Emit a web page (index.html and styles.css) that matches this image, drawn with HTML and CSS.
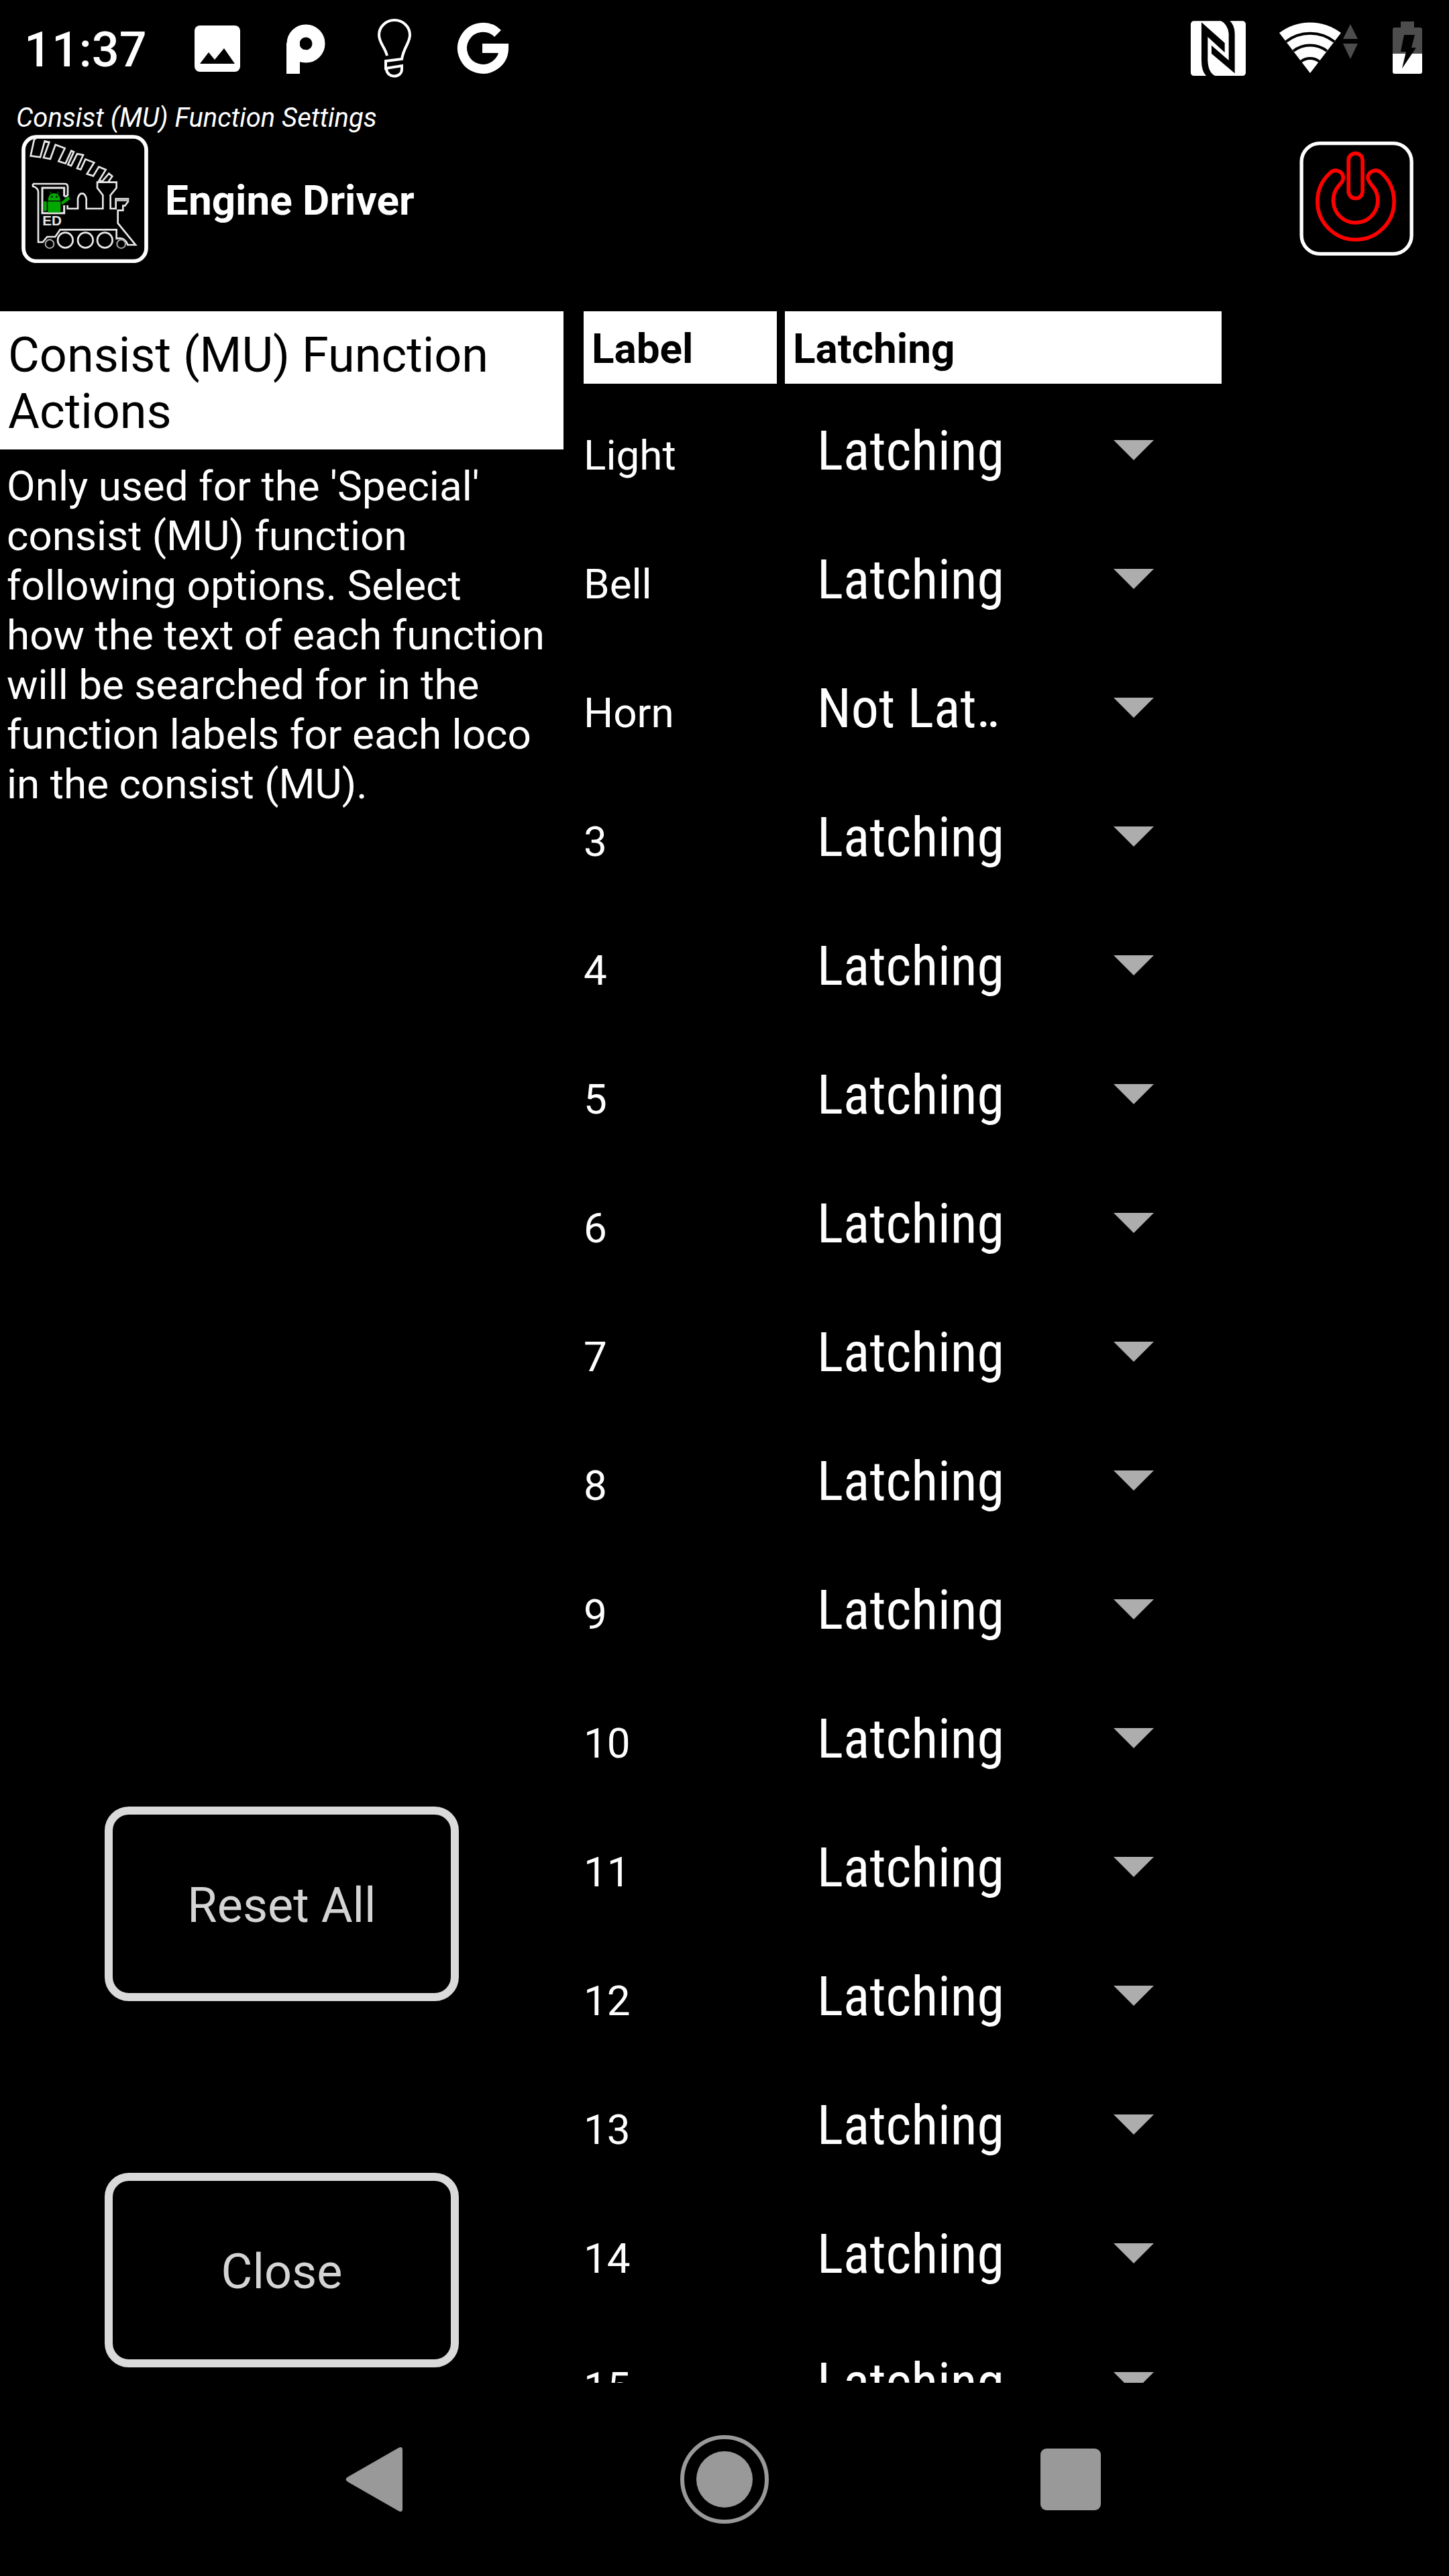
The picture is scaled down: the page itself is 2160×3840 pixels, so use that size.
FILE: index.html
```html
<!DOCTYPE html>
<html lang="en">
<head>
<meta charset="utf-8">
<title>Engine Driver</title>
<meta name="viewport" content="width=device-width, initial-scale=1">
<link rel="stylesheet" href="styles.css">
</head>
<body>
<div class="status-bar">
  <time class="clock">11:37</time>
  <div class="status-icons">
    <svg class="status-icon" viewBox="274 22 100 100" aria-hidden="true"><rect x="290" y="38" width="68" height="69" rx="8" fill="#fff"/><path d="M298 95 L311 78 L320 89 L334 72 L350 95Z"/></svg>
    <svg class="status-icon" viewBox="406 22 100 100" aria-hidden="true"><circle cx="456" cy="65" r="19" fill="none" stroke="#fff" stroke-width="19"/><path d="M427 64H447V74H456V92H447V110H427Z" fill="#fff"/></svg>
    <svg class="status-icon" viewBox="538 22 100 100" aria-hidden="true"><path d="M577 83C574 70 565 64 565 52A23 22 0 0 1 611 52C611 64 602 70 599 88L575 91V102L599 98V103C599 117 577 117 576 103" fill="none" stroke="#fff" stroke-width="4"/></svg>
    <svg class="status-icon" viewBox="670 22 100 100" aria-hidden="true"><path d="M742 50A31 31 0 1 0 751 72H719" fill="none" stroke="#fff" stroke-width="14"/></svg>
  </div>
  <div class="status-icons status-icons-end">
    <svg class="status-icon" viewBox="78 66 300 300" aria-hidden="true"><rect x="105" y="94" width="246" height="245" rx="14" fill="#fff"/><path d="M153 100L257 192V235L181 165V270Q183 325 215 340H175Q153 320 153 270ZM198 203L275 270V150Q270 108 240 93H280Q302 115 302 150V328L198 240Z"/></svg>
    <svg class="status-icon status-icon-wifi" viewBox="1898 22 128 100" aria-hidden="true"><path d="M1953 109L1907 49A76 76 0 0 1 1999 49Z" fill="#fff"/><path d="M1917 62A59 59 0 0 1 1989 62M1928 76A41 41 0 0 1 1978 76M1939 92A22 22 0 0 1 1967 92" fill="none" stroke="#000" stroke-width="4"/><path d="M2013 36L2024 58H2002ZM2002 65H2024L2013 88Z" fill="#4d4d4d"/></svg>
    <svg class="status-icon status-icon-battery" viewBox="2058 22 80 100" aria-hidden="true"><path d="M2088 32H2108V41H2117Q2120 41 2120 44V80H2076V44Q2076 41 2079 41H2088Z" fill="#4d4d4d"/><path d="M2076 80H2120V107Q2120 110 2117 110H2079Q2076 110 2076 107Z" fill="#fff"/><path d="M2093 52H2109L2104 71H2111L2090 102L2096 77H2088Z"/></svg>
  </div>
</div>

<header class="app-header">
  <p class="screen-name">Consist (MU) Function Settings</p>
  <div class="app-bar">
    <svg class="app-logo" viewBox="97 60 570 573" aria-hidden="true">
      <g fill="none" stroke="#e8e8e8" stroke-width="8">
        <rect x="106" y="69" width="549" height="556" rx="58" stroke="#fff" stroke-width="17"/>
        <path d="M163 76L154 80L138 154L181 160L201 88L221 93L196 162L226 168L249 104L291 120L263 178L294 188L320 131L331 136L305 193L319 198L346 145L373 150L346 210L362 215L383 169L422 184L390 235L418 244L443 203L474 216L444 265L458 268L488 233L503 245L484 272"/>
        <path d="M148 279H290Q304 279 304 292V330L290 338M148 279V290Q171 296 172 315V540H192L212 516H248L270 484H522V524Q560 516 572 552H607L528 455V398H551V377H560L574 358V346H519V390H495V330L522 297V272H436V297L461 330V390H387V345Q382 322 368 322Q354 322 349 345V390H303V375"/>
        <path d="M520 351H576" stroke="#bbb" stroke-width="13"/>
        <path d="M288 335V297H190V410H288V375" stroke-width="9"/>
        <circle cx="293" cy="531" r="34"/><circle cx="383" cy="531" r="34"/><circle cx="470" cy="531" r="34"/>
        <circle cx="223" cy="548" r="19" stroke="#aaa" stroke-width="6"/><circle cx="543" cy="548" r="19" stroke="#aaa" stroke-width="6"/>
      </g>
      <g fill="#00a800">
        <path d="M215 354Q218 321 243 321Q268 321 271 354Z"/>
        <rect x="215" y="358" width="57" height="49"/><rect x="197" y="357" width="13" height="44" rx="5"/>
        <path d="M275 361L305 335Q315 339 311 350L280 373Z"/>
        <path d="M230 326L224 314M257 326L262 314" stroke="#00a800" stroke-width="3"/>
      </g>
      <circle cx="233" cy="337" r="4"/><circle cx="254" cy="337" r="4"/>
      <text class="logo-text" x="191" y="465">ED</text>
    </svg>
    <h1 class="app-title">Engine Driver</h1>
    <button class="power-button" type="button" aria-label="Power">
      <svg class="power-icon" viewBox="590 629 514 518" aria-hidden="true">
        <rect x="599" y="640" width="494" height="496" rx="82" fill="none" stroke="#fff" stroke-width="16"/>
        <g fill="none" stroke="#f00" stroke-width="17"><rect x="810" y="685" width="63" height="202" rx="31"/><path d="M725 775A172 172 0 1 0 960 775C935 750 895 765 897 797C900 812 910 822 918 832A100 100 0 1 1 765 832C775 820 787 810 786 797C787 765 750 750 725 775Z"/></g>
      </svg>
    </button>
  </div>
</header>

<main class="content">
  <section class="intro">
    <h2 class="intro-title">Consist (MU) Function Actions</h2>
    <p class="intro-text">Only used for the 'Special' consist (MU) function following options. Select how the text of each function will be searched for in the function labels for each loco in the consist (MU).</p>
    <div class="actions">
      <button class="action-button" type="button">Reset All</button>
      <button class="action-button" type="button">Close</button>
    </div>
  </section>
  <section class="functions">
    <table class="function-table">
      <thead><tr><th class="column-head column-label" scope="col"><span class="head-text">Label</span></th><th class="column-head" scope="col"><span class="head-text">Latching</span></th></tr></thead>
      <tbody>
        <tr><th class="row-head" scope="row"><label for="f0">Light</label></th><td class="row-cell"><div class="picker"><select class="picker-select" id="f0"><option>Latching</option></select></div></td></tr>
        <tr><th class="row-head" scope="row"><label for="f1">Bell</label></th><td class="row-cell"><div class="picker"><select class="picker-select" id="f1"><option>Latching</option></select></div></td></tr>
        <tr><th class="row-head" scope="row"><label for="f2">Horn</label></th><td class="row-cell"><div class="picker"><select class="picker-select" id="f2"><option>Not Lat‥</option></select></div></td></tr>
        <tr><th class="row-head" scope="row"><label for="f3">3</label></th><td class="row-cell"><div class="picker"><select class="picker-select" id="f3"><option>Latching</option></select></div></td></tr>
        <tr><th class="row-head" scope="row"><label for="f4">4</label></th><td class="row-cell"><div class="picker"><select class="picker-select" id="f4"><option>Latching</option></select></div></td></tr>
        <tr><th class="row-head" scope="row"><label for="f5">5</label></th><td class="row-cell"><div class="picker"><select class="picker-select" id="f5"><option>Latching</option></select></div></td></tr>
        <tr><th class="row-head" scope="row"><label for="f6">6</label></th><td class="row-cell"><div class="picker"><select class="picker-select" id="f6"><option>Latching</option></select></div></td></tr>
        <tr><th class="row-head" scope="row"><label for="f7">7</label></th><td class="row-cell"><div class="picker"><select class="picker-select" id="f7"><option>Latching</option></select></div></td></tr>
        <tr><th class="row-head" scope="row"><label for="f8">8</label></th><td class="row-cell"><div class="picker"><select class="picker-select" id="f8"><option>Latching</option></select></div></td></tr>
        <tr><th class="row-head" scope="row"><label for="f9">9</label></th><td class="row-cell"><div class="picker"><select class="picker-select" id="f9"><option>Latching</option></select></div></td></tr>
        <tr><th class="row-head" scope="row"><label for="f10">10</label></th><td class="row-cell"><div class="picker"><select class="picker-select" id="f10"><option>Latching</option></select></div></td></tr>
        <tr><th class="row-head" scope="row"><label for="f11">11</label></th><td class="row-cell"><div class="picker"><select class="picker-select" id="f11"><option>Latching</option></select></div></td></tr>
        <tr><th class="row-head" scope="row"><label for="f12">12</label></th><td class="row-cell"><div class="picker"><select class="picker-select" id="f12"><option>Latching</option></select></div></td></tr>
        <tr><th class="row-head" scope="row"><label for="f13">13</label></th><td class="row-cell"><div class="picker"><select class="picker-select" id="f13"><option>Latching</option></select></div></td></tr>
        <tr><th class="row-head" scope="row"><label for="f14">14</label></th><td class="row-cell"><div class="picker"><select class="picker-select" id="f14"><option>Latching</option></select></div></td></tr>
        <tr><th class="row-head" scope="row"><label for="f15">15</label></th><td class="row-cell"><div class="picker"><select class="picker-select" id="f15"><option>Latching</option></select></div></td></tr>
      </tbody>
    </table>
  </section>
</main>

<nav class="nav-bar" aria-label="System">
  <button class="nav-button" type="button" aria-label="Back"><svg class="nav-icon" viewBox="492 3624 144 144" aria-hidden="true"><path d="M519 3692L594 3649Q600 3646 600 3652V3740Q600 3746 594 3743L519 3700Q512 3696 519 3692Z" fill="#999"/></svg></button>
  <button class="nav-button" type="button" aria-label="Home"><svg class="nav-icon" viewBox="0 0 144 144" aria-hidden="true"><circle cx="72" cy="72" r="63" fill="none" stroke="#999" stroke-width="6"/><circle cx="72" cy="72" r="42" fill="#999"/></svg></button>
  <button class="nav-button" type="button" aria-label="Recent apps"><svg class="nav-icon" viewBox="0 0 144 144" aria-hidden="true"><rect x="27" y="26" width="90" height="92" rx="9" fill="#999"/></svg></button>
</nav>
</body>
</html>
```
FILE: styles.css
```css
* {
  box-sizing: border-box;
}

body {
  display: flex;
  flex-direction: column;
  height: 100vh;
  margin: 0;
  overflow: hidden;
  background: #000;
  color: #fff;
  font-family: Roboto, "Liberation Sans", sans-serif;
  font-size: 62px;
}

button {
  padding: 0;
  border: 0;
  background: none;
  color: inherit;
  font: inherit;
}

svg {
  display: block;
}

/* System status bar */
.status-bar {
  display: flex;
  align-items: center;
  height: 144px;
  padding: 0 22px 0 36px;
}

.clock {
  width: 238px;
  padding-top: 6px;
  font-size: 72px;
  font-weight: 500;
  line-height: 84px;
}

.status-icons {
  display: flex;
  gap: 32px;
}

.status-icons-end {
  margin-left: auto;
}

.status-icon {
  width: 100px;
  height: 100px;
}

.status-icon-wifi {
  width: 128px;
}

.status-icon-battery {
  width: 80px;
}

/* Application header */
.screen-name {
  margin: 0;
  padding: 8px 24px 0;
  font-size: 40px;
  font-style: italic;
  line-height: 48px;
}

.app-bar {
  display: flex;
  align-items: center;
  height: 264px;
  padding: 0 52px 72px 32px;
}

.app-logo {
  width: 190px;
  height: 191px;
}

.logo-text {
  fill: #e8e8e8;
  font-family: "Liberation Sans", sans-serif;
  font-size: 62px;
  font-weight: 700;
}

.app-title {
  margin: 0 auto 0 24px;
  padding-top: 4px;
  font-size: 62px;
  font-weight: 700;
}

.power-icon {
  width: 171px;
  height: 172px;
}

/* Two-column content */
.content {
  display: grid;
  flex: 1;
  grid-template-columns: 7fr 11fr;
  grid-template-rows: minmax(0, 1fr);
  min-height: 0;
}

.intro {
  display: flex;
  flex-direction: column;
}

.intro-title {
  margin: 0;
  padding: 24px 12px 14px;
  background: #fff;
  color: #000;
  font-size: 72px;
  font-weight: 400;
  line-height: 84px;
}

.intro-text {
  margin: 0;
  padding: 18px 24px 0 10px;
  line-height: 74px;
}

.actions {
  display: flex;
  flex-direction: column;
  align-items: center;
  gap: 256px;
  margin-top: auto;
  padding-bottom: 23px;
}

.action-button {
  width: 528px;
  height: 290px;
  padding-top: 4px;
  border: 12px solid #dadada;
  border-radius: 36px;
  color: #d4d4d4;
  font-size: 72px;
}

.functions {
  padding-left: 30px;
  overflow: hidden;
}

.function-table {
  width: 952px;
  border-spacing: 0;
  table-layout: fixed;
}

.column-label {
  width: 300px;
  padding-right: 12px;
}

.column-head {
  padding-top: 0;
  padding-bottom: 0;
  padding-left: 0;
  text-align: left;
}

.head-text {
  display: block;
  padding: 19px 12px 15px;
  background: #fff;
  color: #000;
  line-height: 74px;
}

.row-head {
  padding: 0;
  font-weight: 400;
  text-align: left;
  vertical-align: baseline;
}

.row-cell {
  padding: 8px 0 0;
  vertical-align: baseline;
}

.picker {
  position: relative;
}

.picker::after {
  position: absolute;
  top: 76px;
  right: 102px;
  width: 60px;
  height: 30px;
  background: #adadad;
  clip-path: polygon(0 0, 100% 0, 50% 100%);
  content: "";
  pointer-events: none;
}

.picker-select {
  display: block;
  width: 100%;
  height: 184px;
  padding: 0 102px 0 48px;
  border: 0;
  appearance: none;
  background: #000;
  color: #fff;
  font-family: "Roboto Condensed", Roboto, "Liberation Sans Narrow", sans-serif;
  font-size: 82px;
}

/* System navigation bar */
.nav-bar {
  display: flex;
  align-items: center;
  justify-content: center;
  gap: 372px;
  height: 288px;
}

.nav-icon {
  width: 144px;
  height: 144px;
}
```
